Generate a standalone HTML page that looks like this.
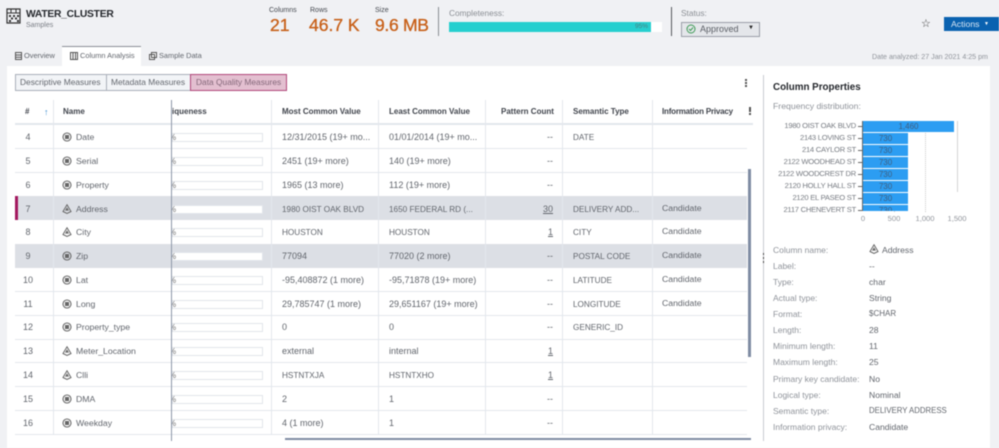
<!DOCTYPE html>
<html><head><meta charset="utf-8"><title>WATER_CLUSTER</title>
<style>
html,body{margin:0;padding:0;background:#f0f1f4}
#r{position:relative;width:999px;height:448px;overflow:hidden;background:#f0f1f4;font-family:"Liberation Sans",sans-serif;font-size:9px;color:#62666d;filter:blur(.45px)}
#r div,#r span.a,#r svg.a{position:absolute}
.t{white-space:nowrap;line-height:12px}
.c{font-size:8.2px;margin-top:1px}
.m{font-size:8.7px}
.h{font-weight:bold;color:#40444c;font-size:8px;top:106px;white-space:nowrap;line-height:12px}
.n{width:24px;text-align:center;left:16px;margin-top:-6px}
.row{left:15px;width:732px;height:1px;background:#e3e7ed}
.sel{left:15px;width:732px;height:24px;background:#dcdfe5}
.v{width:1px;top:100px;height:334px;background:#e3e7ed}
.bar{left:172px;width:89px;height:7px;background:#fff;border:1px solid #e2e5ea}
.p{left:172px;font-size:8px;line-height:9px;width:4px;overflow:hidden;color:#777;text-indent:-3px;white-space:nowrap}
.rt{text-align:right;left:505px;width:48px}
.b{left:863px;height:11px;background:#2c9df2;width:45px;color:#3f5f80;text-align:center;font-size:8px;line-height:11px}
.l{width:92px;left:764px;text-align:right;color:#787c83;font-size:7.6px;letter-spacing:-.25px;line-height:12px;white-space:nowrap}
.k{color:#8f939a;left:773px;font-size:8.5px;line-height:12px;white-space:nowrap}
.w{color:#62666d;left:869px;font-size:8.6px;line-height:12px;white-space:nowrap}
.ax{color:#92969d;font-size:7.600px;top:213px;width:30px;text-align:center;line-height:12px}
.tab{font-size:7.400px;top:50px;color:#62666d;white-space:nowrap;line-height:12px}
.st{font-size:7px;color:#44484f;top:6px;line-height:10px}
.big{font-size:17.500px;color:#c8611a;top:14px;line-height:22px;white-space:nowrap;-webkit-text-stroke:.35px #c8611a}
.d{width:2px;height:2px;background:#555}
</style></head><body><div id="r">
<svg width="0" height="0" style="position:absolute"><defs>
<g id="ci"><circle cx="5" cy="5" r="4" fill="none" stroke="#666" stroke-width="1.1"/><rect x="3" y="3" width="4" height="4" fill="#666"/></g>
<g id="tr"><path d="M5 .8L9 7.5 5 9.4 1 7.5Z" fill="none" stroke="#666" stroke-width="1"/><path d="M5 3.2L7 6.6H3Z" fill="#666"/></g>
</defs></svg>

<!-- header -->
<svg class="a" style="left:6px;top:8px" width="15" height="16" viewBox="0 0 15 16"><path d="M1 1H14V15H1Z" fill="none" stroke="#333" stroke-width="1.2"/><path d="M1 5H14M5 1V5M10 1V5" stroke="#333"/><path d="M3 7h2v2H3zM7 7h2v2H7zM11 7h2v2h-2zM5 9.500h2v2H5zM9 9.500h2v2H9zM3 12h2v2H3zM11 12h2v2h-2z" fill="#333"/></svg>
<div class="t" style="left:26px;top:7px;font-size:10.300px;letter-spacing:-.25px;font-weight:bold;color:#24272c;line-height:15px">WATER_CLUSTER</div>
<div class="t" style="left:26px;top:20px;font-size:7px;color:#7a7e85">Samples</div>
<div class="st" style="left:269px">Columns</div><div class="big" style="left:270px">21</div>
<div class="st" style="left:310px">Rows</div><div class="big" style="left:309px">46.7 K</div>
<div class="st" style="left:375px">Size</div><div class="big" style="left:375px;letter-spacing:-.3px">9.6 MB</div>
<div style="left:438px;top:7px;width:1px;height:29px;background:#8a8d92"></div>
<div class="t" style="left:449px;top:7px;font-size:8.300px;color:#8b8f95">Completeness:</div>
<div style="left:449px;top:22px;width:213px;height:10px;background:#fff"></div>
<div style="left:449px;top:22px;width:202px;height:10px;background:#25cfcf"></div>
<div class="t" style="left:635px;top:22px;font-size:6.500px;line-height:10px;color:#4a7f80">95%</div>
<div style="left:671px;top:7px;width:1px;height:29px;background:#55585d"></div>
<div class="t" style="left:681px;top:7px;font-size:8.300px;color:#8b8f95">Status:</div>
<div style="left:681px;top:22px;width:77px;height:13px;background:#e4e6ea;border:1px solid #9a9fa8"></div>
<svg class="a" style="left:686px;top:24px" width="10" height="10" viewBox="0 0 10 10"><circle cx="5" cy="5" r="4" fill="none" stroke="#3d9a55" stroke-width="1"/><path d="M3 5l1.500 1.500L7 3.500" fill="none" stroke="#3d9a55"/></svg>
<div class="t" style="left:700px;top:23px;font-size:9px;color:#5a5e65">Approved</div>
<div class="t" style="left:748px;top:22px;font-size:6px;color:#222">▼</div>
<div class="t" style="left:921px;top:18px;font-size:11px;color:#333">☆</div>
<div style="left:944px;top:17px;width:55px;height:14px;background:#0a62b0"></div>
<div class="t" style="left:951px;top:18px;font-size:8.700px;color:#d8e6f4">Actions</div>
<div class="t" style="left:984px;top:18px;font-size:5px;color:#fff">▼</div>

<!-- tabs -->
<div style="left:62px;top:46px;width:79px;height:20px;background:#fff;border-top:1px solid #8b8f96;box-sizing:border-box"></div>
<svg class="a" style="left:15px;top:52px" width="7" height="8"><path d="M.5.500h6v7h-6zM.5 3h6M.5 5.200h6" fill="none" stroke="#555"/></svg>
<div class="tab" style="left:24px">Overview</div>
<svg class="a" style="left:70px;top:52px" width="8" height="8"><path d="M.5 0v8M3 0v8M5.500 0v8M7.500 0v8M0 .5h8M0 7.500h8" fill="none" stroke="#555"/></svg>
<div class="tab" style="left:80px">Column Analysis</div>
<svg class="a" style="left:149px;top:52px" width="8" height="8"><path d="M2.500.5h5v5h-5zM.5 2.500h5v5h-5z" fill="#fff" stroke="#555"/></svg>
<div class="tab" style="left:159px">Sample Data</div>
<div class="t" style="left:872px;top:52px;font-size:7.100px;color:#8f939a;line-height:10px">Date analyzed: 27 Jan 2021 4:25 pm</div>

<!-- panel -->
<div style="left:7px;top:66px;width:983px;height:382px;background:#fff"></div>
<div style="left:15px;top:74px;width:91px;height:15px;background:#f2f4f7;border:1px solid #aab0ba"></div>
<div style="left:106px;top:74px;width:83px;height:15px;background:#f2f4f7;border:1px solid #aab0ba"></div>
<div style="left:190px;top:74px;width:95px;height:15px;background:#e3bfd0;border:1px solid #b0487a"></div>
<div class="t" style="left:20px;top:76px;font-size:8.400px;color:#64686f">Descriptive Measures</div>
<div class="t" style="left:111px;top:76px;font-size:8.400px;color:#64686f">Metadata Measures</div>
<div class="t" style="left:196px;top:76px;font-size:8.400px;color:#84687a">Data Quality Measures</div>
<div class="d" style="left:745px;top:79px"></div><div class="d" style="left:745px;top:82px"></div><div class="d" style="left:745px;top:85px"></div>

<!-- selected rows -->
<div class="sel" style="top:196px"></div>
<div style="left:15px;top:196px;width:3px;height:24px;background:#a3185f"></div>
<div class="sel" style="top:244px"></div>

<!-- lines -->
<div class="row" style="top:123px;width:738px;height:2px"></div>
<div class="row" style="top:148px"></div><div class="row" style="top:172px"></div>
<div class="row" style="top:291px"></div><div class="row" style="top:315px"></div>
<div class="row" style="top:339px"></div><div class="row" style="top:362px"></div>
<div class="row" style="top:386px"></div><div class="row" style="top:410px"></div>
<div class="row" style="top:434px"></div>
<div class="v" style="left:53px"></div><div class="v" style="left:271px"></div><div class="v" style="left:378px"></div><div class="v" style="left:485px"></div><div class="v" style="left:562px"></div><div class="v" style="left:652px"></div>

<!-- header row -->
<div class="h" style="left:25px">#</div>
<div class="t" style="left:44px;top:106px;color:#3f8fd0;font-size:9px">↑</div>
<div class="h" style="left:63px">Name</div>
<div class="h" style="left:172px">iqueness</div>
<div class="h" style="left:282px">Most Common Value</div>
<div class="h" style="left:389px">Least Common Value</div>
<div class="h" style="left:501px">Pattern Count</div>
<div class="h" style="left:573px">Semantic Type</div>
<div class="h" style="left:662px;letter-spacing:-.2px">Information Privacy</div>
<div class="d" style="left:749px;top:107px;height:5px"></div><div class="d" style="left:749px;top:113px"></div>

<!-- rows: # -->
<div class="t n" style="top:137px">4</div><div class="t n" style="top:161px">5</div><div class="t n" style="top:185px">6</div><div class="t n" style="top:209px">7</div><div class="t n" style="top:232px">8</div><div class="t n" style="top:256px">9</div><div class="t n" style="top:280px">10</div><div class="t n" style="top:304px">11</div><div class="t n" style="top:327px">12</div><div class="t n" style="top:351px">13</div><div class="t n" style="top:375px">14</div><div class="t n" style="top:399px">15</div><div class="t n" style="top:423px">16</div>

<!-- icons -->
<svg class="a" style="left:62px;top:132px" width="10" height="10"><use href="#ci"/></svg>
<svg class="a" style="left:62px;top:156px" width="10" height="10"><use href="#ci"/></svg>
<svg class="a" style="left:62px;top:180px" width="10" height="10"><use href="#ci"/></svg>
<svg class="a" style="left:62px;top:204px" width="10" height="10"><use href="#tr"/></svg>
<svg class="a" style="left:62px;top:227px" width="10" height="10"><use href="#tr"/></svg>
<svg class="a" style="left:62px;top:251px" width="10" height="10"><use href="#ci"/></svg>
<svg class="a" style="left:62px;top:275px" width="10" height="10"><use href="#ci"/></svg>
<svg class="a" style="left:62px;top:299px" width="10" height="10"><use href="#ci"/></svg>
<svg class="a" style="left:62px;top:322px" width="10" height="10"><use href="#ci"/></svg>
<svg class="a" style="left:62px;top:346px" width="10" height="10"><use href="#tr"/></svg>
<svg class="a" style="left:62px;top:370px" width="10" height="10"><use href="#tr"/></svg>
<svg class="a" style="left:62px;top:394px" width="10" height="10"><use href="#ci"/></svg>
<svg class="a" style="left:62px;top:418px" width="10" height="10"><use href="#ci"/></svg>

<!-- names -->
<div class="t m" style="left:76px;top:131px">Date</div><div class="t m" style="left:76px;top:155px">Serial</div><div class="t m" style="left:76px;top:179px">Property</div><div class="t m" style="left:76px;top:203px">Address</div><div class="t m" style="left:76px;top:226px">City</div><div class="t m" style="left:76px;top:250px">Zip</div><div class="t m" style="left:76px;top:274px">Lat</div><div class="t m" style="left:76px;top:298px">Long</div><div class="t m" style="left:76px;top:321px">Property_type</div><div class="t m" style="left:76px;top:345px">Meter_Location</div><div class="t m" style="left:76px;top:369px">Clli</div><div class="t m" style="left:76px;top:393px">DMA</div><div class="t m" style="left:76px;top:417px">Weekday</div>

<!-- bars -->
<div class="bar" style="top:133px"></div><div class="bar" style="top:157px"></div><div class="bar" style="top:181px"></div><div class="bar" style="top:205px"></div><div class="bar" style="top:228px"></div><div class="bar" style="top:252px"></div><div class="bar" style="top:276px"></div><div class="bar" style="top:300px"></div><div class="bar" style="top:323px"></div><div class="bar" style="top:347px"></div><div class="bar" style="top:371px"></div><div class="bar" style="top:395px"></div><div class="bar" style="top:419px"></div>
<div class="p" style="top:133px">%</div><div class="p" style="top:157px">%</div><div class="p" style="top:181px">%</div><div class="p" style="top:205px">%</div><div class="p" style="top:228px">%</div><div class="p" style="top:252px">%</div><div class="p" style="top:276px">%</div><div class="p" style="top:300px">%</div><div class="p" style="top:323px">%</div><div class="p" style="top:347px">%</div><div class="p" style="top:371px">%</div><div class="p" style="top:395px">%</div><div class="p" style="top:419px">%</div>

<!-- most common -->
<div class="t" style="left:282px;top:131px">12/31/2015 (19+ mo...</div><div class="t" style="left:282px;top:155px">2451 (19+ more)</div><div class="t" style="left:282px;top:179px">1965 (13 more)</div><div class="t c" style="left:282px;top:203px">1980 OIST OAK BLVD</div><div class="t c" style="left:282px;top:226px">HOUSTON</div><div class="t" style="left:282px;top:250px">77094</div><div class="t" style="left:282px;top:274px">-95,408872 (1 more)</div><div class="t" style="left:282px;top:298px">29,785747 (1 more)</div><div class="t" style="left:282px;top:321px">0</div><div class="t" style="left:282px;top:345px">external</div><div class="t c" style="left:282px;top:369px">HSTNTXJA</div><div class="t" style="left:282px;top:393px">2</div><div class="t" style="left:282px;top:417px">4 (1 more)</div>

<!-- least common -->
<div class="t" style="left:389px;top:131px">01/01/2014 (19+ mo...</div><div class="t" style="left:389px;top:155px">140 (19+ more)</div><div class="t" style="left:389px;top:179px">112 (19+ more)</div><div class="t c" style="left:389px;top:203px">1650 FEDERAL RD (...</div><div class="t c" style="left:389px;top:226px">HOUSTON</div><div class="t" style="left:389px;top:250px">77020 (2 more)</div><div class="t" style="left:389px;top:274px">-95,71878 (19+ more)</div><div class="t" style="left:389px;top:298px">29,651167 (19+ more)</div><div class="t" style="left:389px;top:321px">0</div><div class="t" style="left:389px;top:345px">internal</div><div class="t c" style="left:389px;top:369px">HSTNTXHO</div><div class="t" style="left:389px;top:393px">1</div><div class="t" style="left:389px;top:417px">1</div>

<!-- pattern -->
<div class="t rt" style="top:131px">--</div><div class="t rt" style="top:155px">--</div><div class="t rt" style="top:179px">--</div><div class="t rt" style="top:203px;text-decoration:underline">30</div><div class="t rt" style="top:226px;text-decoration:underline">1</div><div class="t rt" style="top:250px">--</div><div class="t rt" style="top:274px">--</div><div class="t rt" style="top:298px">--</div><div class="t rt" style="top:321px">--</div><div class="t rt" style="top:345px;text-decoration:underline">1</div><div class="t rt" style="top:369px;text-decoration:underline">1</div><div class="t rt" style="top:393px">--</div><div class="t rt" style="top:417px">--</div>

<!-- semantic -->
<div class="t c" style="left:573px;top:131px">DATE</div><div class="t c" style="left:573px;top:203px">DELIVERY ADD...</div><div class="t c" style="left:573px;top:226px">CITY</div><div class="t c" style="left:573px;top:250px">POSTAL CODE</div><div class="t c" style="left:573px;top:274px">LATITUDE</div><div class="t c" style="left:573px;top:298px">LONGITUDE</div><div class="t c" style="left:573px;top:321px">GENERIC_ID</div>

<!-- privacy -->
<div class="t m" style="left:662px;top:202px">Candidate</div><div class="t m" style="left:662px;top:225px">Candidate</div><div class="t m" style="left:662px;top:249px">Candidate</div><div class="t m" style="left:662px;top:273px">Candidate</div><div class="t m" style="left:662px;top:297px">Candidate</div>

<!-- freeze line and scrollbars -->
<div style="left:171px;top:100px;width:1px;height:341px;background:#8d97a8"></div>
<div style="left:748px;top:169px;width:3px;height:188px;background:#7f8ca3"></div>
<div style="left:285px;top:438px;width:466px;height:2px;background:#7f8ca3"></div>

<!-- right panel -->
<div style="left:763px;top:75px;width:1px;height:366px;background:#c9ccd1"></div>
<div style="left:763px;top:253px;width:1px;height:2px;background:#444"></div><div style="left:763px;top:257px;width:1px;height:2px;background:#444"></div><div style="left:763px;top:261px;width:1px;height:2px;background:#444"></div>
<div class="t" style="left:773px;top:81px;font-size:9.800px;font-weight:bold;color:#24272c;line-height:14px">Column Properties</div>
<div class="t" style="left:773px;top:100px;font-size:8.700px;color:#8f939a">Frequency distribution:</div>

<div style="left:894px;top:121px;width:0;height:91px;border-left:1px dotted #ccc"></div>
<div style="left:925px;top:121px;width:0;height:91px;border-left:1px dotted #ccc"></div>
<div style="left:957px;top:121px;width:1px;height:71px;background:#d5d5d5"></div>
<div class="b" style="top:121px;width:91px">1,460</div>
<div class="b" style="top:133px">730</div><div class="b" style="top:145px">730</div><div class="b" style="top:157px">730</div><div class="b" style="top:169px">730</div><div class="b" style="top:181px">730</div><div class="b" style="top:193px">730</div>
<div class="b" style="top:205px;height:6px;overflow:hidden">730</div>
<div style="left:862px;top:121px;width:1px;height:90px;background:#666"></div>
<div class="l" style="top:120px">1980 OIST OAK BLVD</div><div class="l" style="top:132px">2143 LOVING ST</div><div class="l" style="top:144px">214 CAYLOR ST</div><div class="l" style="top:156px">2122 WOODHEAD ST</div><div class="l" style="top:168px">2122 WOODCREST DR</div><div class="l" style="top:180px">2120 HOLLY HALL ST</div><div class="l" style="top:192px">2120 EL PASEO ST</div><div class="l" style="top:204px">2117 CHENEVERT ST</div>
<div style="left:858px;top:126px;width:4px;height:1px;background:#666"></div><div style="left:858px;top:138px;width:4px;height:1px;background:#666"></div><div style="left:858px;top:150px;width:4px;height:1px;background:#666"></div><div style="left:858px;top:162px;width:4px;height:1px;background:#666"></div><div style="left:858px;top:174px;width:4px;height:1px;background:#666"></div><div style="left:858px;top:186px;width:4px;height:1px;background:#666"></div><div style="left:858px;top:198px;width:4px;height:1px;background:#666"></div><div style="left:858px;top:210px;width:4px;height:1px;background:#666"></div>
<div class="ax" style="left:848px">0</div><div class="ax" style="left:879px">500</div><div class="ax" style="left:910px">1,000</div><div class="ax" style="left:942px">1,500</div>

<div class="k" style="top:244px">Column name:</div>
<svg class="a" style="left:869px;top:244px" width="10" height="10"><use href="#tr"/></svg>
<div class="w" style="left:882px;top:244px">Address</div>
<div class="k" style="top:260px">Label:</div><div class="w" style="top:260px">--</div>
<div class="k" style="top:276px">Type:</div><div class="w" style="top:276px">char</div>
<div class="k" style="top:292px">Actual type:</div><div class="w" style="top:292px">String</div>
<div class="k" style="top:308px">Format:</div><div class="w" style="top:308px;font-size:8px">$CHAR</div>
<div class="k" style="top:324px">Length:</div><div class="w" style="top:324px">28</div>
<div class="k" style="top:340px">Minimum length:</div><div class="w" style="top:340px">11</div>
<div class="k" style="top:356px">Maximum length:</div><div class="w" style="top:356px">25</div>
<div class="k" style="top:373px">Primary key candidate:</div><div class="w" style="top:373px">No</div>
<div class="k" style="top:389px">Logical type:</div><div class="w" style="top:389px">Nominal</div>
<div class="k" style="top:405px">Semantic type:</div><div class="w" style="top:405px;font-size:7.800px">DELIVERY ADDRESS</div>
<div class="k" style="top:421px">Information privacy:</div><div class="w" style="top:421px">Candidate</div>
</div></body></html>
